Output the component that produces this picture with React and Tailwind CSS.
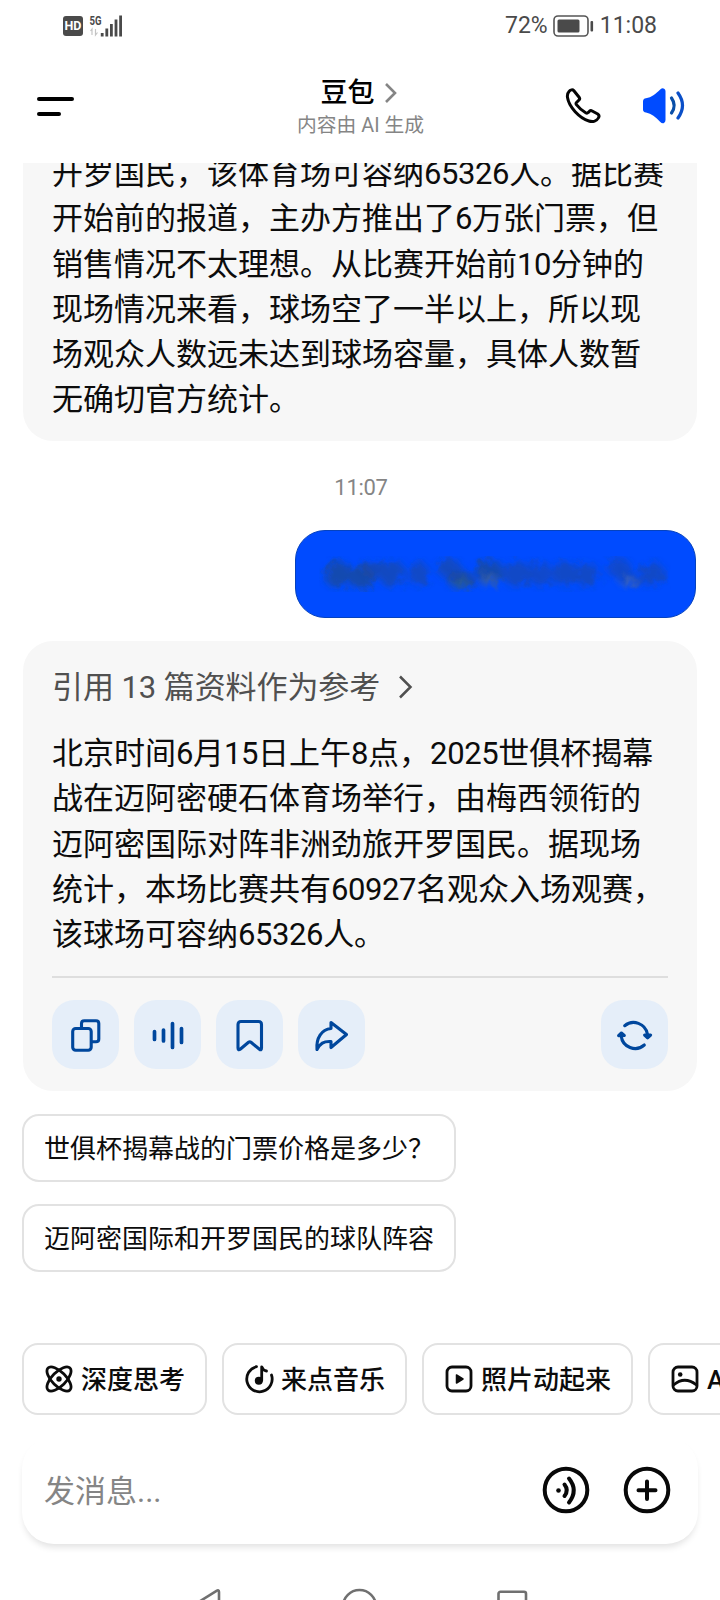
const answerOne = [
  '开罗国民，该体育场可容纳65326人。据比赛',
  '开始前的报道，主办方推出了6万张门票，但',
  '销售情况不太理想。从比赛开始前10分钟的',
  '现场情况来看，球场空了一半以上，所以现',
  '场观众人数远未达到球场容量，具体人数暂',
  '无确切官方统计。',
];

const answerTwo = [
  '北京时间6月15日上午8点，2025世俱杯揭幕',
  '战在迈阿密硬石体育场举行，由梅西领衔的',
  '迈阿密国际对阵非洲劲旅开罗国民。据现场',
  '统计，本场比赛共有60927名观众入场观赛，',
  '该球场可容纳65326人。',
];

// Digit runs are set slightly tighter than the Chinese text around them.
function Lines({ lines }) {
  return (
    <div className="text-[31px] leading-[45.3px] text-[#0c0c0c]">
      {lines.map((line) => (
        <p key={line} className="whitespace-nowrap">
          {line.split(/(\d+)/).map((part, i) =>
            i % 2 ? <span key={i} className="tracking-[-0.4px]">{part}</span> : part
          )}
        </p>
      ))}
    </div>
  );
}

function StatusBar() {
  return (
    <div className="flex h-[52px] items-center justify-between pl-[63px] pr-[63px] text-[23px] text-[#4a4a4a]">
      <div className="flex items-center">
        <div className="flex h-5 w-5 items-center justify-center rounded-[3px] bg-[#4a4a4a] text-[12.5px] font-bold text-white">HD</div>
        <svg className="ml-[6px] h-6 w-9" viewBox="0 0 36 24" fill="none">
          <text x="0.5" y="10.5" fontSize="13" fontWeight="700" fill="#4a4a4a" textLength="12" lengthAdjust="spacingAndGlyphs">5G</text>
          <path d="M3 21v-6l-1.500 2M6.500 15v6l2-2.500" stroke="#c4c4c4" strokeWidth="1.200" />
          <path d="M13.200 22.500v-3.500M17.800 22.500v-8M22.400 22.500v-12.500M27 22.500v-17M31.600 22.500v-21" stroke="#4a4a4a" strokeWidth="2.800" />
        </svg>
      </div>
      <div className="flex items-center">
        <span>72%</span>
        <svg className="ml-[5px] mr-[5px] h-6 w-[42px]" viewBox="0 0 42 24" fill="none">
          <rect x="1" y="2" width="34" height="20" rx="4" stroke="#555" strokeWidth="1.600" />
          <rect x="4.500" y="5.500" width="22" height="13" rx="1.500" fill="#4a4a4a" />
          <rect x="37.500" y="7" width="2.600" height="10.500" rx="1" fill="#4a4a4a" />
        </svg>
        <span>11:08</span>
      </div>
    </div>
  );
}

function Header() {
  return (
    <header className="grid h-[111px] grid-cols-3 pl-[37px] pr-[35px]">
      <div className="flex flex-col gap-[11px] pt-[45px]">
        <div className="h-1 w-[37px] rounded-full bg-black" />
        <div className="h-1 w-6 rounded-full bg-black" />
      </div>
      <div className="flex flex-col items-center pt-[22px]">
        <div className="flex items-center pr-[4px] text-[27px] leading-[38px] text-black">
          <span className="font-medium">豆包</span>
          <svg className="ml-[9px] h-6 w-[14px]" viewBox="0 0 14 24" fill="none">
            <path d="M2 3l9 9-9 9" stroke="#858585" strokeWidth="2.600" />
          </svg>
        </div>
        <div className="whitespace-nowrap pr-px text-[19.800px] leading-[27px] text-[#858585]">内容由 AI 生成</div>
      </div>
      <div className="flex justify-end gap-[41px] pt-9">
        <svg className="h-9 w-9" viewBox="0 0 36 36" fill="none">
          <path d="M4.200 3.300C5.600 1.700 7.600 1.300 8.900 2.800L14.300 9.500Q15.200 10.800 14 12L11.500 14.500Q10.600 15.500 11.400 16.700Q15.500 22 21 25Q22.200 25.600 23.100 24.600L24.500 23.200Q25.700 22.200 27.200 23L32.700 26Q34.800 27.400 33.600 29.600C31.800 32.900 27.900 34.200 23.900 33C14.300 29.900 4 19 2.500 9.500C2.100 7 2.700 4.900 4.200 3.300Z" stroke="#050505" strokeWidth="3" strokeLinejoin="round" />
        </svg>
        <svg className="h-9 w-[43px]" viewBox="0 0 43 36" fill="none">
          <path d="M1 13.500Q1 10.500 4 10.200C9.500 9.500 13.500 6 18.500 1.200Q20.500-.5 22.500 1Q23.500 1.700 23.500 3.300V32Q23.500 34 22 35Q20 35.700 18.300 34C13.500 29 9.500 25.700 4 24.500Q1 24.200 1 21.500Z" fill="#004bff" />
          <path d="M29.500 10Q34.800 17.500 29.500 25" stroke="#0a4fa8" strokeWidth="3.200" strokeLinecap="round" />
          <path d="M36 5Q45 17.500 36 30" stroke="#0a4fc8" strokeWidth="3.200" strokeLinecap="round" />
        </svg>
      </div>
    </header>
  );
}

const smudges = [
  [18, 18, 13, 13, 0.7], [42, 21, 13, 12, 0.7], [52, 13, 10, 9, 0.5], [72, 17, 14, 13, 0.55],
  [100, 18, 10, 12, 0.5], [130, 12, 12, 10, 0.55], [142, 24, 13, 9, 0.8], [170, 16, 14, 12, 0.7],
  [198, 18, 14, 13, 0.5], [222, 18, 12, 12, 0.45], [246, 18, 12, 12, 0.5], [268, 19, 12, 12, 0.5],
  [300, 12, 12, 10, 0.45], [312, 24, 12, 7, 0.5], [334, 18, 12, 11, 0.5],
];

function UserBubble() {
  return (
    <div className="mr-px mt-[27px] flex h-[88px] w-[401px] items-center self-end rounded-[30px] border border-[#0542be] bg-[#004bff] pl-[23px]">
      <svg className="h-9 w-[352px]" viewBox="0 0 352 36">
        <defs>
          <filter id="smudge" x="-5%" y="-30%" width="110%" height="160%">
            <feGaussianBlur stdDeviation="3.500" result="soft" />
            <feTurbulence type="fractalNoise" baseFrequency="0.120" numOctaves="2" seed="4" result="noise" />
            <feDisplacementMap in="soft" in2="noise" scale="12" />
          </filter>
        </defs>
        <g filter="url(#smudge)" fill="#20488f">
          {smudges.map(([x, y, rx, ry, o]) => (
            <ellipse key={x} cx={x} cy={y} rx={rx} ry={ry} fillOpacity={o} />
          ))}
          <ellipse cx="142" cy="27" rx="8" ry="4" fill="#306c88" fillOpacity=".6" />
          <ellipse cx="170" cy="24" rx="9" ry="5" fill="#4a6a98" fillOpacity=".6" />
          <ellipse cx="310" cy="26" rx="8" ry="3" fill="#5c78b0" fillOpacity=".7" />
        </g>
      </svg>
    </div>
  );
}

function Action({ children }) {
  return (
    <button className="flex h-[69px] w-[67px] items-center justify-center rounded-[22px] bg-[#e5eef9]">
      <svg className="h-9 w-9" viewBox="0 0 36 36" fill="none" stroke="#00479d" strokeWidth="3.100" strokeLinecap="round" strokeLinejoin="round">
        {children}
      </svg>
    </button>
  );
}

function AnswerCard() {
  return (
    <section className="mt-[23px] h-[450px] shrink-0 rounded-[30px] bg-[#f7f7f7] px-[29px] pt-6">
      <div className="flex h-[46px] items-center text-[31px] text-[#505050]">
        <span className="tracking-[-0.08px]">引用 13 篇资料作为参考</span>
        <svg className="-mt-[2px] ml-[18px] h-6 w-4" viewBox="0 0 16 24" fill="none">
          <path d="M2 1.500l10.500 10.500L2 22.500" stroke="#505050" strokeWidth="2.500" />
        </svg>
      </div>
      <div className="mt-5">
        <Lines lines={answerTwo} />
      </div>
      <div className="mt-[19px] h-[2px] bg-[#dedede]" />
      <div className="mt-[22px] flex gap-[15px]">
        <Action>
          <path d="M13.500 11V6.500Q13.500 3.700 16.300 3.700H28Q30.800 3.700 30.800 6.500V22Q30.800 24.800 28 24.800H23.500" />
          <rect x="4.700" y="11.500" width="18.500" height="21.800" rx="3" />
        </Action>
        <Action>
          <path d="M4.500 14.500v8M13.500 13v11M22.500 6.500v24M31.500 11.500v14" strokeWidth="3.700" />
        </Action>
        <Action>
          <path d="M6 7.500Q6 4.500 9 4.500H26.500Q29.500 4.500 29.500 7.500V31Q29.500 34 27.200 32L19 25.300Q17.800 24.300 16.500 25.300L8.500 32Q6 34 6 31Z" />
        </Action>
        <Action>
          <path d="M17 5.500L32.500 17.500 17 30.500V24.500C9.500 24 6 26.500 3 32.500C2 21 7.500 12.500 17 11.500Z" />
        </Action>
        <div className="ml-auto">
          <Action>
            <path d="M7.700 8.700A14 14 0 0 1 30.400 17M27.300 28A14 14 0 0 1 4.200 19" />
            <path d="M27.600 18L30.600 20.800 33.600 18ZM1.600 18.600L4.400 16 7.300 18.400Z" fill="#00479d" />
          </Action>
        </div>
      </div>
    </section>
  );
}

function Suggestion({ children }) {
  return (
    <button className="-ml-px flex h-[68px] w-[434px] items-center rounded-[17px] border-2 border-[#e2e2e2] pl-5 pt-[3px] text-[26px] whitespace-nowrap text-[#0c0c0c]">
      {children}
    </button>
  );
}

function Chip({ label, width, children }) {
  return (
    <button className={`flex h-[72px] shrink-0 items-center gap-[7px] rounded-[16px] border-2 border-[#e2e2e2] pl-[21px] text-[26px] font-medium whitespace-nowrap text-[#0c0c0c] ${width}`}>
      <svg className="h-[29px] w-[29px] shrink-0" viewBox="0 0 29 29" fill="none" stroke="#0c0c0c" strokeWidth="2.800" strokeLinecap="round" strokeLinejoin="round">
        {children}
      </svg>
      <span className="pt-[2px]">{label}</span>
    </button>
  );
}

function Composer() {
  return (
    <div className="mx-[22px] mt-[22px] flex h-[107px] items-center rounded-[32px] bg-white pb-px pl-[22px] pr-[27px] shadow-[0_5px_7px_-2px_rgba(0,0,0,0.12)]">
      <span className="pt-[5px] text-[31px] text-[#858585]">发消息...</span>
      <div className="ml-auto flex gap-[33px]">
        <svg className="h-12 w-12" viewBox="0 0 48 48" fill="none" stroke="#080808" strokeWidth="4" strokeLinecap="round">
          <circle cx="24" cy="24" r="21.300" />
          <circle cx="16.500" cy="24.500" r="2.300" fill="#080808" stroke="none" />
          <path d="M22.500 18.500Q27 24.200 22.500 30M27 12.500Q36.500 24.200 27 36.500" />
        </svg>
        <svg className="h-12 w-12" viewBox="0 0 48 48" fill="none" stroke="#080808" strokeWidth="4" strokeLinecap="round">
          <circle cx="24" cy="24" r="21.300" />
          <path d="M24 15.500v17.500M15.500 24.200h17" />
        </svg>
      </div>
    </div>
  );
}

export default function App() {
  return (
    <div className="flex h-[1600px] w-[720px] flex-col overflow-hidden bg-white font-[Roboto,'Noto_Sans_CJK_SC',sans-serif]">
      <StatusBar />
      <Header />
      <main className="flex h-[1157px] flex-col overflow-hidden px-[23px]">
        <section className="-mt-[13px] h-[291px] shrink-0 rounded-b-[30px] bg-[#f7f7f7] px-[29px] pt-px">
          <Lines lines={answerOne} />
        </section>
        <time className="mt-[32px] pl-[2px] text-center text-[22px] leading-[30px] tracking-[-0.3px] text-[#858585]">11:07</time>
        <UserBubble />
        <AnswerCard />
        <div className="mt-[23px] flex flex-col gap-[22px]">
          <Suggestion>世俱杯揭幕战的门票价格是多少？</Suggestion>
          <Suggestion>迈阿密国际和开罗国民的球队阵容</Suggestion>
        </div>
      </main>
      <div className="mt-[23px] flex gap-[15px] overflow-hidden pl-[22px]">
        <Chip label="深度思考" width="w-[185px]">
          <ellipse cx="14" cy="14" rx="15.500" ry="7" transform="rotate(45 14 14)" />
          <ellipse cx="14" cy="14" rx="15.500" ry="7" transform="rotate(-45 14 14)" />
          <circle cx="14" cy="14" r="2.700" fill="#0c0c0c" stroke="none" />
        </Chip>
        <Chip label="来点音乐" width="w-[185px]">
          <path d="M11.500 1.700A12.700 12.700 0 1 0 26.500 10" />
          <circle cx="13.800" cy="15.700" r="4" fill="#0c0c0c" stroke="none" />
          <path d="M16.700 15.500V1.800Q18 5.500 21.500 6" />
        </Chip>
        <Chip label="照片动起来" width="w-[211px]">
          <rect x="2" y="2" width="24" height="24" rx="5" />
          <path d="M11.500 10v8l6.500-4z" fill="#0c0c0c" strokeWidth="1.500" />
        </Chip>
        <Chip label="AI 生图" width="w-[185px]">
          <rect x="2" y="2" width="24" height="24" rx="5" />
          <circle cx="9.200" cy="9.500" r="2.300" fill="#0c0c0c" stroke="none" />
          <path d="M2.500 20Q13.500 10.500 25.500 20" />
        </Chip>
      </div>
      <Composer />
      <div className="mt-[44px] flex h-3 items-start justify-center overflow-hidden">
        <svg className="h-10 w-[360px] shrink-0" viewBox="180 0 360 40" fill="none" stroke="#707070" strokeWidth="2.600">
          <path d="M219 4Q219 1.500 216.500 2.800L190 19.500 216.500 36Q219 37 219 34.500Z" />
          <circle cx="359.500" cy="18.500" r="16.500" />
          <rect x="498.500" y="3.800" width="27.500" height="28" rx="2" />
        </svg>
      </div>
    </div>
  );
}
